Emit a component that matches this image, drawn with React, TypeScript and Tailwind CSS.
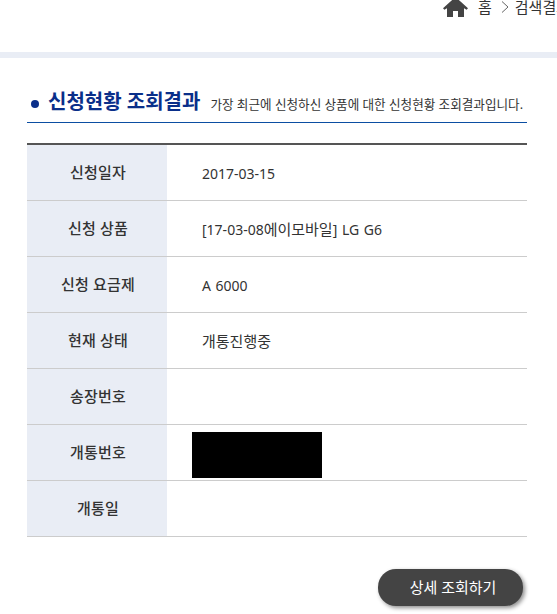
import type { ReactNode } from 'react';

const rows: { label: string; value?: ReactNode; hidden?: boolean }[] = [
  { label: '신청일자', value: '2017-03-15' },
  {
    label: '신청 상품',
    value: (
      <>
        [17-03-08<span className="text-[15px]">에이모바일</span>] LG G6
      </>
    ),
  },
  { label: '신청 요금제', value: 'A 6000' },
  { label: '현재 상태', value: <span className="text-[15px]">개통진행중</span> },
  { label: '송장번호' },
  { label: '개통번호', hidden: true },
  { label: '개통일' },
];

function HomeIcon() {
  return (
    <svg width="25" height="20" viewBox="0 0 25 20" className="text-[#444444]" fill="currentColor">
      <path d="M12.5 0 L25 11.2 L23.6 12.8 L21 11.2 V20 H15 V14 H10 V20 H4 V11.2 L1.4 12.8 L0 11.2 Z" />
    </svg>
  );
}

export default function App() {
  return (
    <div className="w-[557px] h-[614px] overflow-hidden bg-white text-[#333333] font-['Noto_Sans','Noto_Sans_CJK_KR',sans-serif]">
      {/* Breadcrumb */}
      <div className="h-[52px] relative overflow-hidden">
        <div className="absolute left-[443px] -top-[3px] flex items-center whitespace-nowrap">
          <HomeIcon />
          <span className="ml-[10px] text-[15px] leading-[20px]">홈</span>
          <svg width="10" height="14" viewBox="0 0 10 14" className="ml-[8px]" fill="none" stroke="#666666" strokeWidth="1">
            <path d="M2 1.5 L8 7 L2 12.5" />
          </svg>
          <span className="ml-[5px] text-[15px] leading-[20px]">검색결과</span>
        </div>
      </div>
      <div className="h-[6px] bg-[#e9edf5]" />

      <div className="px-[27px] w-[527px] box-content">
        {/* Title */}
        <div className="mt-[29px] h-[36px] w-[500px] border-b border-[#0b4ea2] flex items-center pl-[4px] pb-[5px] whitespace-nowrap">
          <span className="mt-[3px] w-[8px] h-[8px] rounded-full bg-[#0a2f8a]" />
          <h2 className="ml-[9px] text-[20px] font-bold text-[#0a2f8a] leading-[24px]">신청현황 조회결과</h2>
          <p className="ml-[10px] mt-[5px] text-[12.6px] text-[#333333] leading-[16px]">
            가장 최근에 신청하신 상품에 대한 신청현황 조회결과입니다.
          </p>
        </div>

        {/* Result table */}
        <div className="mt-[20px] w-[500px] border-t-2 border-[#555555]">
          {rows.map((row) => (
            <div key={row.label} className="flex h-[56px] border-b border-[#cccccc]">
              <div className="w-[140px] pl-[2px] bg-[#e9edf5] flex items-center justify-center text-[15px] font-medium tracking-[0.2px]">
                {row.label}
              </div>
              <div className="flex-1 flex items-center pl-[35px] pt-[1px] text-[14px] [word-spacing:1px]">
                {row.hidden ? (
                  <div className="-ml-[10px] mt-[3px] w-[130px] h-[46px] bg-black" />
                ) : (
                  <span>{row.value}</span>
                )}
              </div>
            </div>
          ))}
        </div>

        {/* Button */}
        <div className="w-[496px] mt-[32px] flex justify-end">
          <button className="w-[145px] h-[37px] pl-[5px] rounded-[18px] bg-[#444444] text-white text-[15px] shadow-[2px_2px_4px_rgba(0,0,0,0.45)]">
            상세 조회하기
          </button>
        </div>
      </div>
    </div>
  );
}
